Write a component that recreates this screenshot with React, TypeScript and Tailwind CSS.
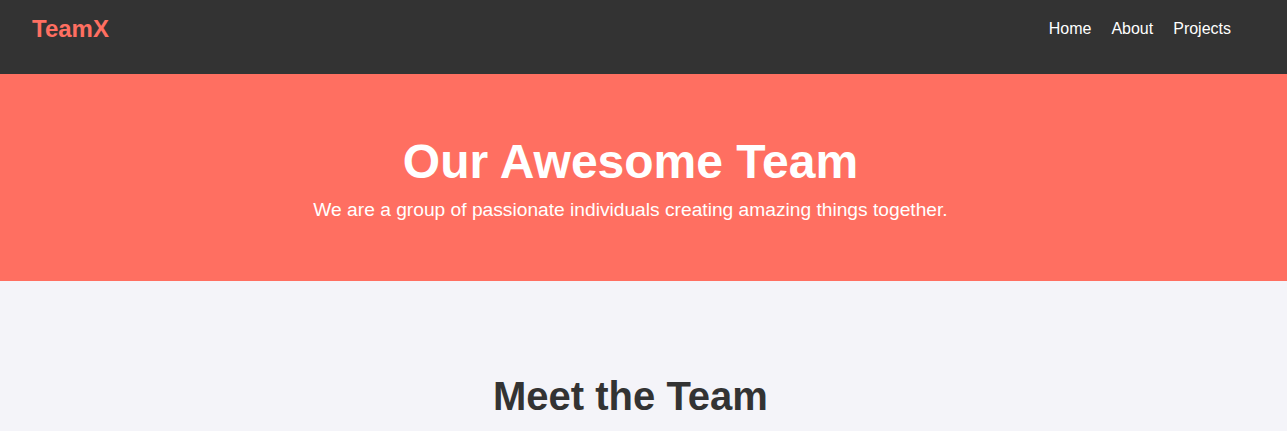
export default function App() {
  const links = ["Home", "About", "Projects"];

  return (
    <div className="min-h-screen bg-[#f4f4f9] font-['Liberation_Sans',Arial,sans-serif] text-[#333]">
      {/* Navbar */}
      <header className="flex h-[74px] items-start justify-between bg-[#333] px-8 pt-[15px]">
        <div className="text-[24px] font-bold leading-[normal] text-[#ff6f61]">TeamX</div>
        <nav className="mr-6 mt-[5px] flex gap-5">
          {links.map((l) => (
            <a key={l} href="#" className="text-[16px] leading-[normal] text-white">
              {l}
            </a>
          ))}
        </nav>
      </header>

      {/* Hero */}
      <section className="bg-[#ff6f61] py-[60px] pr-[26px] text-center text-white">
        <h1 className="mb-[10px] text-[48px] font-bold leading-[normal]">Our Awesome Team</h1>
        <p className="text-[19.2px] leading-[normal]">
          We are a group of passionate individuals creating amazing things together.
        </p>
      </section>

      {/* Team */}
      <section className="pt-[60px] pr-[26px] pb-16 text-center">
        <h2 className="mt-[33px] text-[40px] font-bold leading-[normal] text-[#333]">Meet the Team</h2>
      </section>
    </div>
  );
}
